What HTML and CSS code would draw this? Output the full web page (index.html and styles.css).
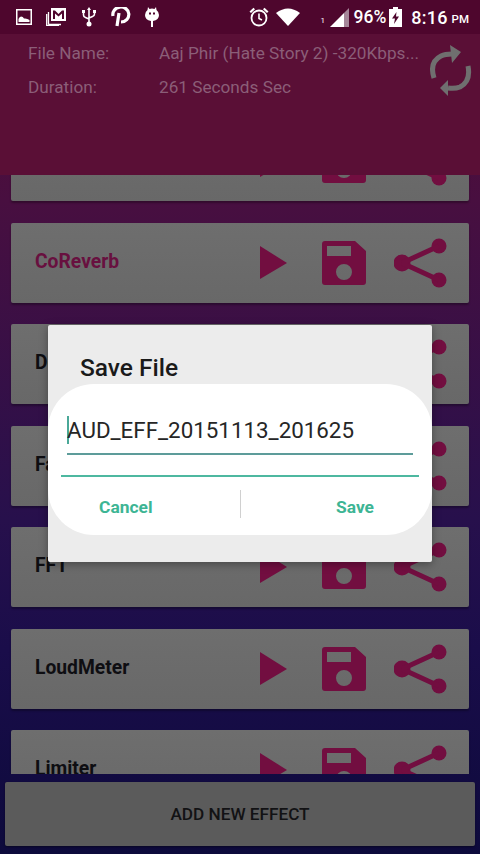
FILE: index.html
```html
<!DOCTYPE html>
<html lang="en">
<head>
<meta charset="utf-8">
<title>Save File</title>
<link rel="stylesheet" href="styles.css">
</head>
<body>
<svg class="defs" width="0" height="0" aria-hidden="true">
  <symbol id="play" viewBox="0 0 28 34"><path d="M0 0L27 17L0 33Z"/></symbol>
  <symbol id="save" viewBox="0 0 44 44"><path fill-rule="evenodd" d="M3 0H33L44 10V41Q44 44 41 44H3Q0 44 0 41V3Q0 0 3 0ZM5 5V15H29V5ZM22 23A8 8 0 1 0 22 39A8 8 0 1 0 22 23Z"/></symbol>
  <symbol id="share" viewBox="0 0 54 50"><circle cx="8" cy="25" r="8.500"/><circle cx="45" cy="8" r="7.500"/><circle cx="45" cy="42" r="7.500"/><path d="M8 25L45 8M8 25L45 42" fill="none" stroke="currentColor" stroke-width="5"/></symbol>
</svg>
<div class="screen">
  <div class="status">
    <div class="status-left">
      <svg width="16" height="16" viewBox="0 0 16 16"><path fill="#fff" fill-rule="evenodd" d="M0 0H16V16H0ZM1.500 1.500V14.500H14.500V1.500ZM2.500 13V10Q3 8 5 7.500Q7 7.500 8 9.500Q11 9 13.500 11V13Z"/></svg>
      <svg width="20" height="18" viewBox="0 0 20 18"><path fill="none" stroke="#fff" stroke-width="1.300" d="M2.500 4V15.500Q2.500 16.500 3.500 16.500H15M0.700 6V17.300H13"/><path fill="#fff" fill-rule="evenodd" d="M5 0H20V13H5ZM7 2.500V11H9V5.500L12.500 8.500L16 5.500V11H18V2.500H16L12.500 6L9 2.500Z"/></svg>
      <svg class="ic-usb" width="14" height="20" viewBox="0 0 14 20"><path fill="none" stroke="#fff" stroke-width="1.600" d="M7 2V17M1.500 5V8Q1.500 10 3.500 10.500L7 12M12.500 5V7Q12.500 9 10.500 9.500L7 11"/><path fill="#fff" d="M7 0L9 3H5ZM0 3H3V6H0ZM11 3H14V6H11Z"/><circle cx="7" cy="17" r="2.500" fill="#fff"/></svg>
      <svg class="ic-p" width="20" height="20" viewBox="0 0 20 20"><path fill="none" stroke="#fff" stroke-width="3.200" d="M2 9A8 7.500 0 1 1 10 15M8 6L6 19"/></svg>
      <svg width="14" height="20" viewBox="0 0 14 20"><path fill="#fff" fill-rule="evenodd" d="M3 0L4.500 2Q7 1 9.500 2L11 0L11.500 3Q14 5 14 8Q14 13 8 14V20H6V14Q0 13 0 8Q0 5 2.500 3ZM4 5.500V7.500H6V5.500ZM8 5.500V7.500H10V5.500Z"/></svg>
    </div>
    <div class="status-right">
      <svg class="alarm" width="20" height="20" viewBox="0 0 20 20"><circle cx="10" cy="11" r="7.500" fill="none" stroke="#fff" stroke-width="1.800"/><path fill="none" stroke="#fff" stroke-width="1.600" d="M10 6.500V11.500L13 13"/><path fill="#fff" d="M0.500 4.500L4.500 0.800L6 2.200L2 6ZM19.500 4.500L15.500 0.800L14 2.200L18 6Z"/></svg>
      <svg class="wifi" width="24" height="18" viewBox="0 0 24 18"><path fill="#fff" d="M0 5Q12 -4 24 5L12 18Z"/></svg>
      <span class="sim">1</span>
      <svg class="signal" width="19" height="19" viewBox="0 0 19 19"><path fill="#fff" d="M0 19L14 5V19Z"/><path fill="#a58699" d="M14 5L19 0V19H14Z"/></svg>
      <span class="pct">96%</span>
      <svg class="battery" width="13" height="20" viewBox="0 0 13 20"><path fill="#fff" fill-rule="evenodd" d="M4 0H9V2H13V20H0V2H4ZM7.500 5L3 11.500H6L5 17L10 9.500H7Z"/></svg>
      <span class="time">8:16</span><span class="ampm">PM</span>
    </div>
  </div>

  <div class="list-area">
    <div class="list">
      <div class="card"><span class="card-name"></span><div class="actions"><svg class="i-play"><use href="#play"/></svg><svg class="i-save"><use href="#save"/></svg><svg class="i-share"><use href="#share"/></svg></div></div>
      <div class="card"><span class="card-name accent">CoReverb</span><div class="actions"><svg class="i-play"><use href="#play"/></svg><svg class="i-save"><use href="#save"/></svg><svg class="i-share"><use href="#share"/></svg></div></div>
      <div class="card"><span class="card-name">Delay</span><div class="actions"><svg class="i-play"><use href="#play"/></svg><svg class="i-save"><use href="#save"/></svg><svg class="i-share"><use href="#share"/></svg></div></div>
      <div class="card"><span class="card-name">Fade</span><div class="actions"><svg class="i-play"><use href="#play"/></svg><svg class="i-save"><use href="#save"/></svg><svg class="i-share"><use href="#share"/></svg></div></div>
      <div class="card"><span class="card-name">FFT</span><div class="actions"><svg class="i-play"><use href="#play"/></svg><svg class="i-save"><use href="#save"/></svg><svg class="i-share"><use href="#share"/></svg></div></div>
      <div class="card"><span class="card-name">LoudMeter</span><div class="actions"><svg class="i-play"><use href="#play"/></svg><svg class="i-save"><use href="#save"/></svg><svg class="i-share"><use href="#share"/></svg></div></div>
      <div class="card"><span class="card-name">Limiter</span><div class="actions"><svg class="i-play"><use href="#play"/></svg><svg class="i-save"><use href="#save"/></svg><svg class="i-share"><use href="#share"/></svg></div></div>
    </div>
    <div class="header">
      <div class="info">
        <div class="info-row"><span class="info-label">File Name:</span><span class="info-value">Aaj Phir (Hate Story 2) -320Kbps...</span></div>
        <div class="info-row"><span class="info-label">Duration:</span><span class="info-value">261 Seconds Sec</span></div>
      </div>
      <svg class="refresh" width="42" height="54" viewBox="0 0 42 54"><path fill="none" stroke="#6f6f6f" stroke-width="5" d="M4 34Q-1 18 11 12Q15 10 22 10M38 22Q41 37 30 43Q25 45 18 44"/><path fill="#6f6f6f" d="M20 1L31 8L22 19ZM10 44L18 36L18 52Z"/></svg>
    </div>
  </div>

  <div class="footer"><button class="add-btn">ADD NEW EFFECT</button></div>
</div>

<div class="dialog">
  <h2 class="dialog-title">Save File</h2>
  <div class="dialog-body">
    <div class="field"><span class="caret"></span><span class="field-text">AUD_EFF_20151113_201625</span></div>
    <div class="rule"></div>
    <div class="dialog-actions">
      <span class="dlg-btn dlg-cancel">Cancel</span>
      <span class="dlg-sep"></span>
      <span class="dlg-btn dlg-save">Save</span>
    </div>
  </div>
</div>
</body>
</html>
```

FILE: styles.css
```css
* { box-sizing: border-box; }
html, body { margin: 0; height: 854px; overflow: hidden; }
body { font-family: Roboto, "Liberation Sans", sans-serif; position: relative; }
.defs { position: absolute; }
.screen {
  width: 480px; height: 854px; display: flex; flex-direction: column;
  background: linear-gradient(#560b30 0, #480f40 200px, #27104c 520px, #1a0d4a 650px, #0d0a3c 854px);
}
.status {
  height: 34px; flex: none; background: #4e062d;
  display: flex; justify-content: space-between; align-items: center;
  padding: 0 11px 0 16px; color: #fff;
}
.status-left { display: flex; align-items: center; gap: 14px; }
.ic-usb { margin-left: 2px; }
.ic-p { margin-left: 1px; }
.status-right { display: flex; align-items: center; }
.wifi { margin-left: 7px; }
.sim { font-size: 8px; margin: 6px 0 0 21px; width: 7px; }
.signal { margin-left: 2px; }
.pct { font-size: 17.500px; font-weight: 500; margin-left: 5px; }
.battery { margin-left: 3px; }
.time { font-size: 18px; font-weight: 500; margin-left: 9px; letter-spacing: 0.2px; }
.ampm { font-size: 11.500px; font-weight: 500; margin: 3px 0 0 4px; }

.list-area { flex: 1; position: relative; overflow: hidden; }
.header {
  position: absolute; top: 0; left: 0; right: 0; height: 141px; background: #5a0f36;
  display: flex; justify-content: space-between; padding: 8px 8px 0 28px;
}
.info { display: flex; flex-direction: column; gap: 11px; }
.info-row { display: flex; font-size: 17.200px; line-height: 23px; color: #8b5e78; }
.info-label { width: 131px; }
.refresh { margin-top: 2px; }

.list { display: flex; flex-direction: column; gap: 21.500px; padding: 87px 11px 0; }
.card {
  height: 80px; flex: none; background: linear-gradient(#6e6e6e, #686868);
  border-radius: 2px; box-shadow: 0 2px 2px rgba(0, 0, 0, 0.3);
  display: flex; align-items: center; justify-content: space-between;
  padding: 0 21px 0 24px;
}
.card-name { font-size: 19.300px; font-weight: 700; color: #0e0e12; margin-top: -3px; }
.card-name.accent { color: #68103f; }
.actions { display: flex; align-items: center; color: #720e40; fill: #720e40; }
.i-play { width: 28px; height: 34px; }
.i-save { width: 44px; height: 44px; margin-left: 34px; }
.i-share { width: 54px; height: 50px; margin-left: 28px; }

.footer { height: 80px; flex: none; padding: 8px 5px 6px; }
.add-btn {
  width: 100%; height: 64px; border: 0; border-radius: 2px; padding: 0;
  background: #5b5b5b; color: #121214; font: 500 17.200px Roboto, sans-serif;
  box-shadow: 0 1px 2px rgba(0, 0, 0, 0.4);
}

.dialog {
  position: absolute; left: 48px; top: 325px; width: 384px; height: 237px;
  background: #ececec; border-radius: 2px; box-shadow: 0 2px 8px rgba(0, 0, 0, 0.35);
  padding-top: 26px;
}
.dialog-title { margin: 0 0 0 32px; font-size: 24.500px; line-height: 33px; font-weight: 500; color: #1a1a1a; }
.dialog-body {
  height: 151px; background: #fff; border-radius: 46px;
  display: flex; flex-direction: column; padding: 0 13px;
}
.field {
  margin: 26px 6px 0; height: 45px; border-bottom: 2px solid #5d9c9a;
  display: flex; align-items: flex-start;
}
.caret { width: 2px; height: 28px; background: #4aa898; margin-top: 6px; flex: none; }
.field-text { font-size: 22.350px; line-height: 40px; color: #262626; margin-left: -2px; }
.rule { height: 1.500px; background: #4db8a0; margin-top: 20px; }
.dialog-actions {
  flex: 1; display: grid; grid-template-columns: 1fr 1px 1fr; align-items: center;
}
.dlg-btn { font-size: 17.400px; font-weight: 700; color: #3db594; margin-top: 2px; }
.dlg-cancel { padding-left: 38px; }
.dlg-save { text-align: right; padding-right: 45px; }
.dlg-sep { width: 1px; height: 28px; background: #d0d0d0; margin-top: -3px; }
```
